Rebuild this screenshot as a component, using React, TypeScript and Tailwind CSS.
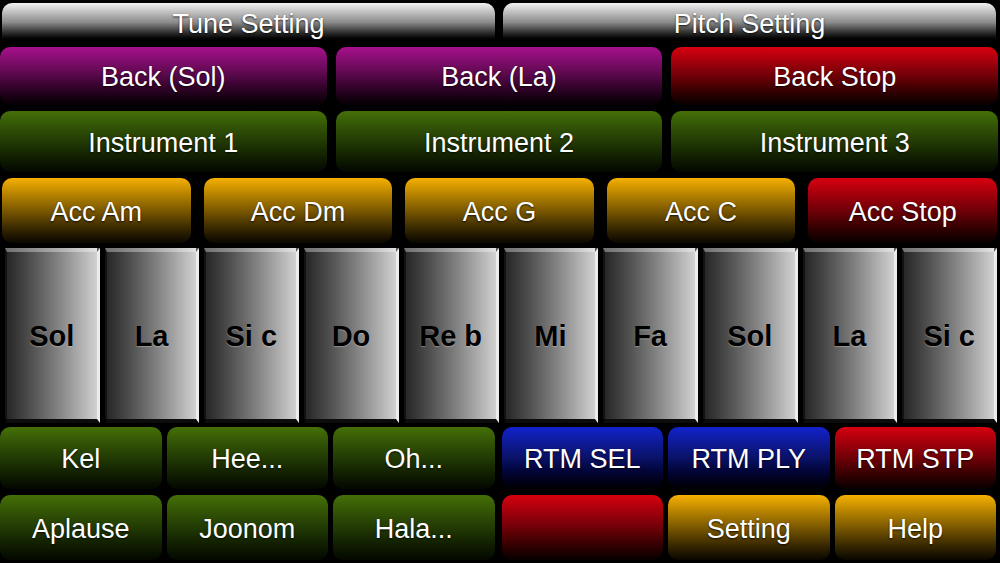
import React from 'react';

type Tone = 'gray' | 'magenta' | 'red' | 'green' | 'orange' | 'blue';

const tones: Record<Tone, string> = {
    gray: 'bg-linear-to-b from-[#f2f2f2] via-[#8a8a8a] to-[#000000]',
    magenta: 'bg-linear-to-b from-[#a8108e] via-[#560848] to-[#050004]',
    red: 'bg-linear-to-b from-[#d8000f] via-[#700008] to-[#080000]',
    green: 'bg-linear-to-b from-[#447008] via-[#223a04] to-[#040800]',
    orange: 'bg-linear-to-b from-[#f6b000] via-[#7c5900] to-[#0a0700]',
    blue: 'bg-linear-to-b from-[#1222cc] via-[#0a1268] to-[#000004]',
};

function Pad({ label, tone, className = '' }: { label?: string; tone: Tone; className?: string }) {
    return (
        <div
            className={`flex flex-1 items-center justify-center pt-[3px] rounded-[10px] text-white text-[27px] leading-none [text-shadow:0_1px_2px_rgba(0,0,0,0.8)] ${tones[tone]} ${className}`}
        >
            {label}
        </div>
    );
}

function Key({ label }: { label: string }) {
    return (
        <div className="flex flex-1 items-center justify-center pt-[2px] bg-origin-border bg-linear-to-r from-[#242424] to-[#d8d8d8] border-t-[4px] border-r-[3px] border-b-[4px] border-l-[2px] border-t-[rgba(255,255,255,0.35)] border-r-[#ececec] border-b-[#0c0c0c] border-l-[rgba(0,0,0,0.5)] text-black font-bold text-[29px] leading-none [text-shadow:0_1px_1px_rgba(255,255,255,0.3)]">
            {label}
        </div>
    );
}

export default function App() {
    const keys = ['Sol', 'La', 'Si c', 'Do', 'Re b', 'Mi', 'Fa', 'Sol', 'La', 'Si c'];

    return (
        <div className="w-[1000px] h-[563px] bg-black flex flex-col pt-[3px] pb-[3px] font-['Liberation_Sans',Arial,sans-serif] overflow-hidden">
            {/* Settings */}
            <div className="flex h-[39px] gap-[8px] pl-[2px] pr-[4px]">
                <Pad label="Tune Setting" tone="gray" className="rounded-b-none" />
                <Pad label="Pitch Setting" tone="gray" className="rounded-b-none" />
            </div>

            {/* Backing */}
            <div className="flex h-[58px] gap-[9px] pr-[2px] mt-[5px]">
                <Pad label="Back (Sol)" tone="magenta" />
                <Pad label="Back (La)" tone="magenta" />
                <Pad label="Back Stop" tone="red" />
            </div>

            {/* Instruments */}
            <div className="flex h-[61px] gap-[9px] pr-[2px] mt-[6px]">
                <Pad label="Instrument 1" tone="green" />
                <Pad label="Instrument 2" tone="green" />
                <Pad label="Instrument 3" tone="green" />
            </div>

            {/* Accompaniment */}
            <div className="flex h-[65px] gap-[13px] pl-[2px] pr-[3px] mt-[6px]">
                <Pad label="Acc Am" tone="orange" />
                <Pad label="Acc Dm" tone="orange" />
                <Pad label="Acc G" tone="orange" />
                <Pad label="Acc C" tone="orange" />
                <Pad label="Acc Stop" tone="red" />
            </div>

            {/* Keyboard */}
            <div className="flex h-[175px] gap-[5px] pl-[5px] pr-[3px] mt-[5px]">
                {keys.map((k, i) => (
                    <Key key={i} label={k} />
                ))}
            </div>

            {/* Sounds / rhythm */}
            <div className="flex h-[62px] gap-[5px] pr-[4px] mt-[4px]">
                <Pad label="Kel" tone="green" />
                <Pad label="Hee..." tone="green" />
                <Pad label="Oh..." tone="green" />
                <Pad label="RTM SEL" tone="blue" className="ml-[2px]" />
                <Pad label="RTM PLY" tone="blue" />
                <Pad label="RTM STP" tone="red" />
            </div>

            <div className="flex h-[65px] gap-[5px] pr-[4px] mt-[6px]">
                <Pad label="Aplause" tone="green" />
                <Pad label="Joonom" tone="green" />
                <Pad label="Hala..." tone="green" />
                <Pad tone="red" className="ml-[2px]" />
                <Pad label="Setting" tone="orange" />
                <Pad label="Help" tone="orange" />
            </div>
        </div>
    );
}
